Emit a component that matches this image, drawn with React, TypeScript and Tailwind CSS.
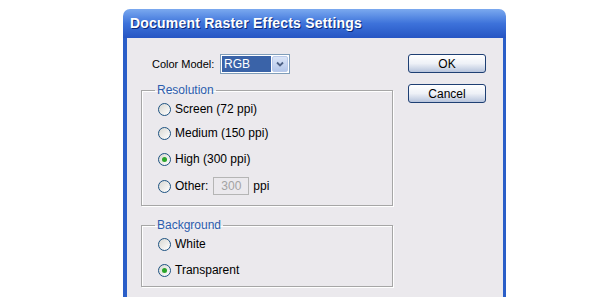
import React from 'react'

function Radio({ label, checked }: { label: string; checked?: boolean }) {
  return (
    <div className="flex items-center h-[20px]">
      <span className="ml-[3px] w-[13px] h-[13px] rounded-full border border-[#1d5281] bg-gradient-to-br from-[#d8d8d2] to-white flex items-center justify-center">
        {checked && <span className="w-[5px] h-[5px] rounded-full bg-[#2aa52a]" />}
      </span>
      <span className="ml-[4px] whitespace-nowrap">{label}</span>
    </div>
  )
}

function XpButton({ children }: { children: React.ReactNode }) {
  return (
    <button className="w-[78px] h-[19px] rounded-[3px] border border-[#1e3f73] bg-gradient-to-b from-white via-[#eef1f7] to-[#b7c4dc] text-black leading-none">
      {children}
    </button>
  )
}

export default function App() {
  return (
    <div className="w-[600px] h-[297px] bg-white overflow-hidden text-[12px] text-black" style={{ fontFamily: '"Liberation Sans", Arial, sans-serif' }}>
      <div className="ml-[123px] mt-[9px] w-[383px]">
        {/* Title bar */}
        <div className="h-[29px] rounded-t-[7px] bg-gradient-to-b from-[#7ba9ef] via-[#3d72da] to-[#2655c3] flex items-center pl-[7px]">
          <span className="text-white font-bold text-[14px] tracking-[0.2px] whitespace-nowrap [text-shadow:1px_1px_0_#0b2a78]">Document Raster Effects Settings</span>
        </div>

        {/* Body */}
        <div className="border-l-4 border-r-[3px] border-[#2a5ec8] bg-[#ebe9ed] h-[260px] flex">
          {/* Left column */}
          <div className="pl-[14px] pt-[16px]">
            <div className="flex items-center">
              <span className="ml-[11px] w-[58px] text-[11px] whitespace-nowrap">Color Model:</span>
              <div className="ml-[10px] w-[70px] h-[20px] border border-[#7f9db9] bg-white flex p-[1px]">
                <div className="flex-1 bg-[#3a63a8] text-white flex items-center pl-[2px]">RGB</div>
                <div className="w-[16px] ml-[1px] rounded-[2px] bg-gradient-to-b from-[#dbe5f7] to-[#b4c7ea] border border-[#b8c9ea] flex items-center justify-center">
                  <svg width="8" height="6" viewBox="0 0 8 6">
                    <path d="M1 1.5 L4 4.5 L7 1.5" stroke="#4d6185" strokeWidth="1.8" fill="none" />
                  </svg>
                </div>
              </div>
            </div>

            {/* Resolution */}
            <fieldset className="mt-[9px] w-[252px] border border-[#a6a6a6] shadow-[1px_1px_0_white,inset_1px_1px_0_white] px-[13px] pb-[9px]">
              <legend className="px-[2px] text-[#2b5dae] leading-[14px]">Resolution</legend>
              <div className="pt-[2px]">
                <Radio label="Screen (72 ppi)" />
                <div className="mt-[4px]"><Radio label="Medium (150 ppi)" /></div>
                <div className="mt-[6px]"><Radio label="High (300 ppi)" checked /></div>
                <div className="mt-[7px] flex items-center h-[20px]">
                  <Radio label="Other:" />
                  <div className="ml-[5px] w-[36px] h-[18px] border border-[#b5b5b5] text-[#a3a3a3] flex items-center justify-center">300</div>
                  <span className="ml-[4px]">ppi</span>
                </div>
              </div>
            </fieldset>

            {/* Background */}
            <fieldset className="mt-[12px] w-[252px] border border-[#a6a6a6] shadow-[1px_1px_0_white,inset_1px_1px_0_white] px-[13px] pb-[6px]">
              <legend className="px-[2px] text-[#2b5dae] leading-[14px]">Background</legend>
              <div className="pt-[2px]">
                <Radio label="White" />
                <div className="mt-[6px]"><Radio label="Transparent" checked /></div>
              </div>
            </fieldset>
          </div>

          {/* Right column */}
          <div className="ml-[15px] pt-[16px] flex flex-col gap-[11px]">
            <XpButton>OK</XpButton>
            <XpButton>Cancel</XpButton>
          </div>
        </div>
      </div>
    </div>
  )
}
